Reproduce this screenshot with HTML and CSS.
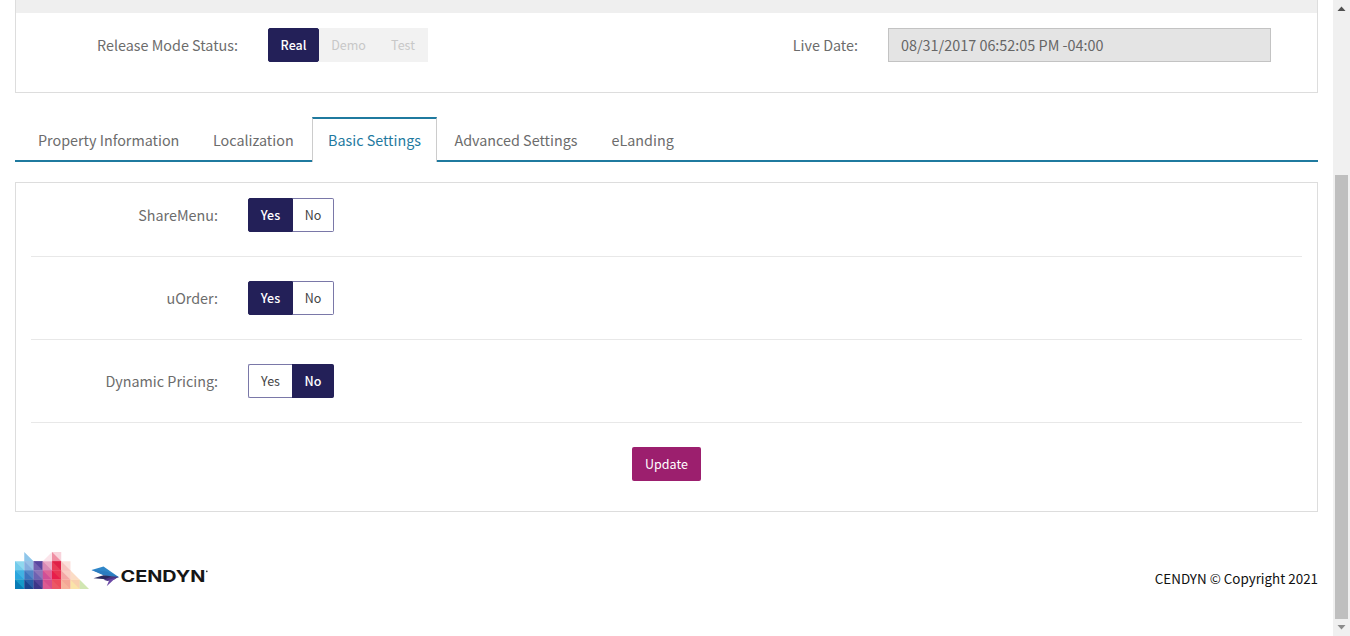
FILE: index.html
```html
<!DOCTYPE html>
<html lang="en">
<head>
<meta charset="utf-8">
<title>Property Settings</title>
<link rel="stylesheet" href="styles.css">
</head>
<body>
<div class="window">
  <div class="page">
    <section class="release">
      <div class="release-head"></div>
      <div class="release-row">
        <label class="label release-label">Release Mode Status:</label>
        <div class="group modes">
          <button class="btn on">Real</button><button class="btn off demo">Demo</button><button class="btn off test">Test</button>
        </div>
        <label class="label live-label">Live Date:</label>
        <div class="field">08/31/2017 06:52:05 PM -04:00</div>
      </div>
    </section>
    <nav class="tabs">
      <a class="tab t1"><span>Property Information</span></a>
      <a class="tab t2"><span>Localization</span></a>
      <a class="tab t3 active"><span>Basic Settings</span></a>
      <a class="tab t4"><span>Advanced Settings</span></a>
      <a class="tab t5"><span>eLanding</span></a>
    </nav>
    <section class="settings">
      <div class="row"><label class="label">ShareMenu:</label><div class="group"><button class="btn yes on">Yes</button><button class="btn no">No</button></div></div>
      <div class="row"><label class="label">uOrder:</label><div class="group"><button class="btn yes on">Yes</button><button class="btn no">No</button></div></div>
      <div class="row"><label class="label">Dynamic Pricing:</label><div class="group"><button class="btn yes">Yes</button><button class="btn no on">No</button></div></div>
      <div class="actions"><button class="update">Update</button></div>
    </section>
    <footer class="footer">
      <svg class="logo" width="194" height="40" viewBox="0 0 194 40">
        <g transform="translate(0 1) scale(9.25)">
          <path fill="#8fc6ea" d="M1 0l1 1H1z"/>
          <path fill="#fbe4ea" d="M4 0v1H3z"/>
          <path fill="#f8d3db" d="M4 0h1v1H4z"/><path fill="#ef8fa3" d="M4 0l1 1H4z"/>
          <path fill="#8fd8ef" d="M0 1h1v1H0z"/><path fill="#73cbeb" d="M0 1l1 1H0z"/>
          <path fill="#85aede" d="M1 1h1v1H1z"/><path fill="#98c0e6" d="M1 1h1v1z"/>
          <path fill="#7560b0" d="M2 1h1v1H2z"/><path fill="#59459f" d="M2 1h1v1z"/>
          <path fill="#e9a9c5" d="M3 1h1v1H3z"/><path fill="#d98ab5" d="M3 1l1 1H3z"/>
          <path fill="#e83b57" d="M4 1h1v1H4z"/><path fill="#df2148" d="M4 1h1v1z"/>
          <path fill="#fbe0dc" d="M5 1h1v1H5z"/><path fill="#f7c4bf" d="M5 1l1 1H5z"/>
          <path fill="#2ba6dd" d="M0 2h1v1H0z"/><path fill="#41b3e3" d="M0 2h1v1z"/>
          <path fill="#3d74bd" d="M1 2h1v1H1z"/><path fill="#5386c7" d="M1 2h1v1z"/>
          <path fill="#6e62b0" d="M2 2h1v1H2z"/><path fill="#8c75b8" d="M2 2h1v1z"/>
          <path fill="#d04f96" d="M3 2h1v1H3z"/><path fill="#df6597" d="M3 2h1v1z"/>
          <path fill="#e71e4b" d="M4 2h1v1H4z"/><path fill="#e93552" d="M4 2h1v1z"/>
          <path fill="#f4a7a5" d="M5 2h1v1H5z"/><path fill="#f9cdc4" d="M5 2h1v1z"/>
          <path fill="#fbdcc5" d="M6 2l1 1H6z"/>
          <path fill="#087bb5" d="M0 3h1v1H0z"/><path fill="#159ac8" d="M0 3h1v1z"/>
          <path fill="#1b458e" d="M1 3h1v1H1z"/><path fill="#285ea7" d="M1 3h1v1z"/>
          <path fill="#3d3688" d="M2 3h1v1H2z"/><path fill="#564399" d="M2 3h1v1z"/>
          <path fill="#dd5b92" d="M3 3h1v1H3z"/><path fill="#d64d8c" d="M3 3h1v1z"/>
          <path fill="#eb5865" d="M4 3h1v1H4z"/><path fill="#ec4b5b" d="M4 3h1v1z"/>
          <path fill="#f6b39b" d="M5 3h1v1H5z"/><path fill="#f4a696" d="M5 3h1v1z"/>
          <path fill="#fae3a8" d="M6 3h1v1H6z"/><path fill="#f9d0ae" d="M6 3h1v1z"/>
          <path fill="#d1e6b2" d="M7 3l1 1H7z"/>
        </g>
        <path fill="#2f86c8" d="M76.500 19l12-3.500 15.500 10.800-13-1.500-7-3z"/>
        <path fill="#2b7cc0" d="M76.500 19l15 1.500 12.500 5.800-15-1.800z"/>
        <path fill="#2a2a60" d="M78.500 27.300l10-3 15.500 2-13 2z"/>
        <path fill="#4b3585" d="M88.500 28.800l7.500-3h7.500l-4 2.700-7 1.500z"/>
        <path fill="#6b48a5" d="M94.500 28.500l6-1.500-8.800 8.300z"/>
        <text class="brand" x="105.500" y="30.600" textLength="85" lengthAdjust="spacingAndGlyphs">CENDYN</text>
        <circle cx="191.800" cy="20.300" r=".9" fill="#333"/>
      </svg>
      <div class="copy">CENDYN © Copyright 2021</div>
    </footer>
  </div>
  <div class="scrollbar">
    <svg width="17" height="17" viewBox="0 0 17 17"><path fill="#505050" d="M4.500 11l4-4.500 4 4.500z"/></svg>
    <div class="thumb"></div>
    <svg width="17" height="17" viewBox="0 0 17 17"><path fill="#8b8b8b" d="M4.500 6l4 4.500 4-4.500z"/></svg>
  </div>
</div>
</body>
</html>
```
FILE: styles.css
```css
* { box-sizing: border-box; }
body { margin: 0; background: #fff; color: #666; font: 14.35px/20px "Noto Sans CJK SC", "Open Sans", sans-serif; overflow: hidden; }
.window { display: flex; height: 636px; }
.page { width: 1333px; padding: 0 15px; }
.release { height: 93px; border: 1px solid #ddd; border-top: 0; }
.release-head { height: 13px; background: #efefef; }
.release-row { display: flex; padding-top: 15px; }
.label { line-height: 34px; text-align: right; white-space: nowrap; color: #6c6c6c; }
.release-label { width: 222px; margin-right: 30px; }
.group { display: flex; height: 34px; }
.modes { width: 160px; }
.btn { height: 34px; padding: 0; border: 1px solid #7a78a8; background: #fff; color: #444; font: 12.500px/32px "Noto Sans CJK SC", "Open Sans", sans-serif; text-align: center; width: 51px; border-radius: 2px; }
.btn.on { background: #232058; border-color: #232058; color: #fff; font-weight: 500; }
.btn.off { background: #f2f2f2; border-color: #f2f2f2; color: #c8c8c8; border-radius: 0; }
.btn.demo { width: 59px; }
.btn.test { width: 50px; }
.btn.yes { width: 45px; border-radius: 2px 0 0 2px; }
.btn.no { width: 41px; border-left: 0; border-radius: 0 2px 2px 0; }
.btn.yes:not(.on) { width: 44px; border-right: 0; }
.btn.no.on { width: 42px; padding-left: 1px; }
.live-label { width: 430px; margin-right: 30px; }
.field { width: 383px; height: 34px; border: 1px solid #c3c3c3; background: #e4e4e4; padding-left: 12px; line-height: 32px; font-size: 14.4px; color: #666; }
.tabs { display: flex; height: 45px; margin-top: 24px; background: linear-gradient(#1f7a9f, #1f7a9f) bottom / 100% 2px no-repeat; }
.tab { height: 45px; padding-top: 13px; white-space: nowrap; color: #6c6c6c; }
.t1 { width: 181px; padding-left: 23px; }
.t2 { width: 116px; padding-left: 17px; }
.t3 { width: 125px; }
.t4 { width: 157px; padding-left: 17.500px; }
.t5 { padding-left: 17.500px; }
.tab.active { border: 1px solid #ccc; border-top: 2px solid #1f7a9f; border-bottom: 0; background: #fff; color: #1f7a9f; padding: 11px 0 0 15px; }
.settings { height: 330px; margin-top: 20px; border: 1px solid #ddd; padding: 0 15px; }
.row { display: flex; height: 83px; padding-top: 24px; border-bottom: 1px solid #e8e8e8; }
.row:first-child { height: 74px; padding-top: 15px; }
.row .label { width: 187px; margin-right: 30px; }
.actions { display: flex; justify-content: center; padding-top: 24px; }
.update { width: 69px; height: 34px; padding: 0; border: 0; border-radius: 2px; background: #9c1f6e; color: #fff; font: 12.500px/34px "Noto Sans CJK SC", "Open Sans", sans-serif; }
.footer { display: flex; justify-content: space-between; padding-top: 39px; }
.brand { font: 700 15.500px Inter, sans-serif; fill: #161616; }
.copy { padding-top: 17px; font-size: 13.4px; color: #111; white-space: nowrap; }
.scrollbar { display: flex; flex-direction: column; align-items: center; width: 17px; background: #f0f0f0; }
.thumb { width: 13px; height: 444px; margin: 158px 0 0; background: #bfbfbf; }
```
